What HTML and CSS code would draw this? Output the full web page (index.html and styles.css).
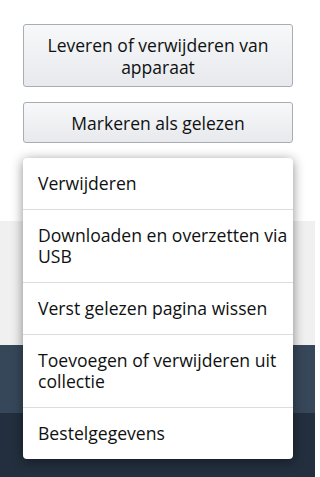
FILE: index.html
```html
<!DOCTYPE html>
<html lang="nl">
<head>
<meta charset="utf-8">
<link rel="stylesheet" href="styles.css">
</head>
<body>
<div class="page">
  <section class="actions">
    <button class="btn">Leveren of verwijderen van apparaat</button>
    <button class="btn">Markeren als gelezen</button>
    <ul class="menu">
      <li class="menu-item">Verwijderen</li>
      <li class="menu-item">Downloaden en overzetten via USB</li>
      <li class="menu-item">Verst gelezen pagina wissen</li>
      <li class="menu-item">Toevoegen of verwijderen uit collectie</li>
      <li class="menu-item">Bestelgegevens</li>
    </ul>
  </section>
  <section class="band-grey"></section>
  <section class="band-blue"></section>
  <section class="band-navy"></section>
</div>
</body>
</html>
```
FILE: styles.css
```css
* { box-sizing: border-box; }
html, body {
  margin: 0;
  padding: 0;
  background: #ffffff;
  font-family: "Open Sans", "Noto Sans", sans-serif;
  color: #0f1111;
}
.page {
  display: flex;
  flex-direction: column;
  width: 315px;
  height: 477px;
  overflow: hidden;
}
.actions {
  position: relative;
  height: 221px;
  padding: 24px 22px 0 23px;
  display: flex;
  flex-direction: column;
  gap: 15px;
  background: #ffffff;
  z-index: 1;
}
.btn {
  display: block;
  width: 270px;
  margin: 0;
  padding: 8.5px 10px;
  border: 1px solid #a9adb3;
  border-radius: 3px;
  background: linear-gradient(to bottom, #f7f8fa, #e7e9ec);
  font-family: inherit;
  font-size: 17.5px;
  line-height: 22px;
  color: #0f1111;
  text-align: center;
}
.menu {
  position: absolute;
  top: 158px;
  left: 23px;
  width: 270px;
  margin: 0;
  padding: 0;
  list-style: none;
  background: #ffffff;
  border-radius: 4px;
  box-shadow: 0 2px 12px rgba(0, 0, 0, 0.45);
  overflow: hidden;
}
.menu-item {
  padding: 15px 1px 15px 15px;
  font-size: 17.6px;
  line-height: 21px;
  border-top: 1px solid #dcdcdc;
}
.menu-item:first-child { border-top: none; }
.band-grey {
  height: 124px;
  background: #f0f0f0;
}
.band-blue {
  height: 68px;
  background: #37475a;
}
.band-navy {
  flex: 1;
  background: #232f3e;
}
```
